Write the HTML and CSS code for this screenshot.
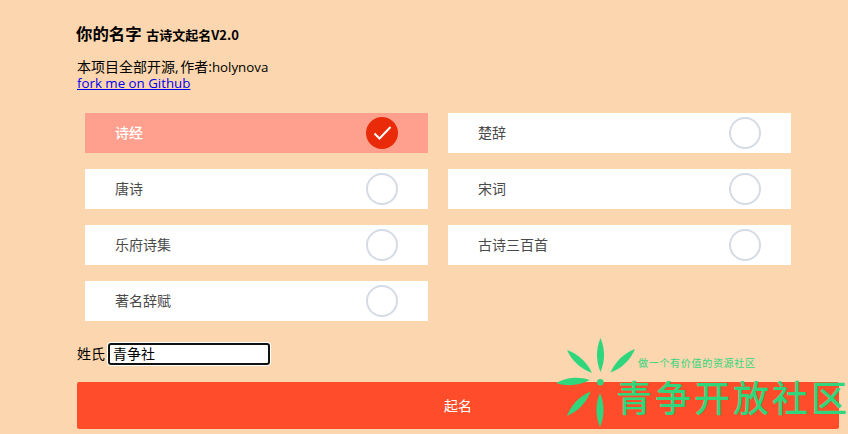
FILE: index.html
```html
<!DOCTYPE html>
<html lang="zh">
<head>
<meta charset="utf-8">
<title>你的名字 古诗文起名V2.0</title>
<link rel="stylesheet" href="styles.css">
</head>
<body>
<main class="page">
  <h1 class="title">你的名字 <small class="subtitle">古诗文起名V2.0</small></h1>
  <p class="intro">本项目全部开源<span class="sep">, </span>作者:<span class="latin">holynova</span><br><a class="latin" href="#">fork me on Github</a></p>
  <div class="options">
    <div class="option selected"><span>诗经</span><i class="radio"><svg viewBox="0 0 32 32" width="32" height="32"><path d="M8.5 16.5l5 5L24.5 10" fill="none" stroke="#fff" stroke-width="2"/></svg></i></div>
    <div class="option"><span>楚辞</span><i class="radio"></i></div>
    <div class="option"><span>唐诗</span><i class="radio"></i></div>
    <div class="option"><span>宋词</span><i class="radio"></i></div>
    <div class="option"><span>乐府诗集</span><i class="radio"></i></div>
    <div class="option"><span>古诗三百首</span><i class="radio"></i></div>
    <div class="option"><span>著名辞赋</span><i class="radio"></i></div>
  </div>
  <div class="surname"><label for="surname">姓氏</label><input id="surname" value="青争社"></div>
  <button class="submit">起名</button>
</main>
<aside class="watermark">
  <svg class="flower" viewBox="0 0 90 96" width="90" height="96">
    <defs><path id="petal" d="M0 0C4.7 11 4.7 23 0 34C-4.7 23 -4.7 11 0 0Z"/></defs>
    <g fill="#2fd67c">
      <circle cx="44.3" cy="44.3" r="3.3"/>
      <use href="#petal" transform="translate(44.5 0)"/>
      <use href="#petal" transform="translate(11 12) rotate(-47.4)"/>
      <use href="#petal" transform="translate(79 11) rotate(46)"/>
      <use href="#petal" transform="translate(0 45) rotate(-95)"/>
      <use href="#petal" transform="translate(11 78) rotate(-136)"/>
      <use href="#petal" transform="translate(44 55)"/>
    </g>
  </svg>
  <div class="slogan">做一个有价值的资源社区</div>
  <div class="brand">青争开放社<span class="brand-last">区</span></div>
</aside>
</body>
</html>
```

FILE: styles.css
```css
* { box-sizing: border-box; }
html, body { margin: 0; height: 100%; overflow: hidden; }
body {
  background: #fbd6ae;
  color: #000;
  font-family: "Open Sans", "Noto Sans CJK SC", sans-serif;
  font-size: 14px;
  position: relative;
}
.page { width: 839px; padding: 23px 0 0 77px; }
.title { margin: 0 0 0 -1px; font-size: 16.4px; line-height: 20px; font-weight: 700; font-family: "Noto Sans CJK SC", sans-serif; word-spacing: 1px; }
.subtitle { font-size: 13px; }
.intro { margin: 14px 0 0; line-height: 16px; }
.intro a { color: #0000ee; }
.sep { letter-spacing: -1px; }
.latin { font-size: 13.3px; }
.options {
  display: grid;
  grid-template-columns: 343px 343px;
  column-gap: 20px;
  row-gap: 16px;
  margin: 22px 0 0 8px;
}
.option {
  height: 40px;
  background: #fff;
  color: #4a4a4a;
  display: flex;
  align-items: center;
  justify-content: space-between;
  padding: 0 30px;
  font-size: 14px;
  font-family: "Noto Sans CJK SC", sans-serif;
}
.option span { padding-bottom: 2px; }
.option.selected { background: #ff9f8d; color: #fff; font-weight: 500; }
.radio {
  width: 32px;
  height: 32px;
  border-radius: 50%;
  border: 2px solid #d5dbe5;
  display: block;
  background: #fff;
}
.selected .radio { border: 0; background: #e92b0a; }
.radio svg { display: block; }
.surname { display: flex; align-items: center; margin-top: 22px; height: 22px; gap: 3px; }
.surname label { padding-bottom: 2px; }
.surname input {
  width: 162px;
  height: 22px;
  border: 2px solid #111;
  border-radius: 3px;
  box-shadow: 0 0 0 1px #fff;
  background: #fff;
  padding: 0 3px 2px;
  font: 14px "Noto Sans CJK SC", sans-serif;
  color: #000;
  outline: none;
}
.submit {
  display: block;
  width: 762px;
  height: 47px;
  margin-top: 17px;
  padding: 0 0 2px;
  border: 0;
  border-radius: 2px;
  background: #ff4d2b;
  color: #fff;
  font: 14px "Noto Sans CJK SC", sans-serif;
}
.watermark { position: absolute; left: 556px; top: 338px; width: 292px; height: 96px; }
.flower { position: absolute; left: 0; top: 0; }
.slogan { position: absolute; left: 82px; top: 18px; font: 400 10px/14px "Noto Sans CJK SC", sans-serif; color: #2fd67c; letter-spacing: 0.7px; white-space: nowrap; }
.brand { position: absolute; left: 60px; top: 33px; font: 500 36px/50px "Noto Sans CJK SC", sans-serif; color: #2fd67c; letter-spacing: 3px; white-space: nowrap; }
.brand-last { letter-spacing: 0; }
```
